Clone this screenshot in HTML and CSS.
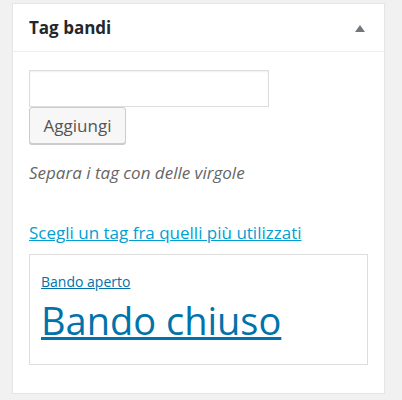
FILE: index.html
```html
<!DOCTYPE html>
<html lang="it">
<head>
  <meta charset="UTF-8">
  <title>Tag bandi</title>
  <link rel="stylesheet" href="styles.css">
</head>
<body>

  <div class="postbox">
    <div class="postbox-header">
      <h2>Tag bandi</h2>
      <span class="toggle-indicator"></span>
    </div>

    <div class="inside">
      <!-- aggiunta tag -->
      <div class="tag-add">
        <input type="text" class="new-tag">
        <button class="button">Aggiungi</button>
      </div>
      <p class="howto">Separa i tag con delle virgole</p>

      <!-- tag più usati -->
      <p class="tagcloud-link"><a href="#">Scegli un tag fra quelli più utilizzati</a></p>
      <div class="tagcloud">
        <a href="#" class="tag-small">Bando aperto</a>
        <a href="#" class="tag-large">Bando chiuso</a>
      </div>
    </div>
  </div>

</body>
</html>
```

FILE: styles.css
```css
body {
  margin: 0;
  padding: 3px 0 0 12px;
  background: #f1f1f1;
  font-family: 'Open Sans', sans-serif;
  color: #444;
}

.postbox {
  width: 373px;
  height: 391px;
  box-sizing: border-box;
  background: #fff;
  border: 1px solid #e5e5e5;
  box-shadow: 0 1px 1px rgba(0,0,0,0.04);
}

.postbox-header {
  display: flex;
  align-items: center;
  justify-content: space-between;
  height: 47px;
  padding: 0 19px 0 16px;
  border-bottom: 1px solid #eee;
}

.postbox-header h2 {
  margin: 0;
  font-size: 17px;
  font-weight: 700;
  color: #23282d;
}

.toggle-indicator {
  width: 0;
  height: 0;
  border-left: 5px solid transparent;
  border-right: 5px solid transparent;
  border-bottom: 7px solid #72777c;
  margin-top: 1px;
}

.inside {
  padding: 18px 16px 0 16px;
}

.tag-add {
  display: flex;
  flex-direction: column;
  align-items: flex-start;
}

.new-tag {
  width: 240px;
  height: 37px;
  box-sizing: border-box;
  margin: 0;
  border: 1px solid #ddd;
  box-shadow: inset 0 1px 2px rgba(0,0,0,0.07);
  font-size: 14px;
}

.button {
  width: 97px;
  height: 37px;
  box-sizing: border-box;
  margin: 0;
  padding: 0 8px;
  font-family: 'Open Sans', sans-serif;
  font-size: 17px;
  color: #555;
  background: #f7f7f7;
  border: 1px solid #ccc;
  border-radius: 3px;
  box-shadow: 0 1px 0 #ccc;
}

.howto {
  margin: 19px 0 0;
  font-size: 17px;
  line-height: 20px;
  font-style: italic;
  color: #666;
}

.tagcloud-link {
  margin: 40px 0 0;
  font-size: 17px;
  line-height: 20px;
}

.tagcloud-link a {
  color: #00a0d2;
}

.tagcloud {
  display: flex;
  flex-direction: column;
  align-items: flex-start;
  width: 339px;
  height: 111px;
  box-sizing: border-box;
  margin-top: 11px;
  padding: 18px 11px 0;
  border: 1px solid #ddd;
}

.tagcloud a {
  color: #0073aa;
}

.tag-small {
  font-size: 14px;
  line-height: 18px;
}

.tag-large {
  margin-top: 7px;
  font-size: 38px;
  line-height: 44px;
  text-decoration-thickness: 3px;
}
```
